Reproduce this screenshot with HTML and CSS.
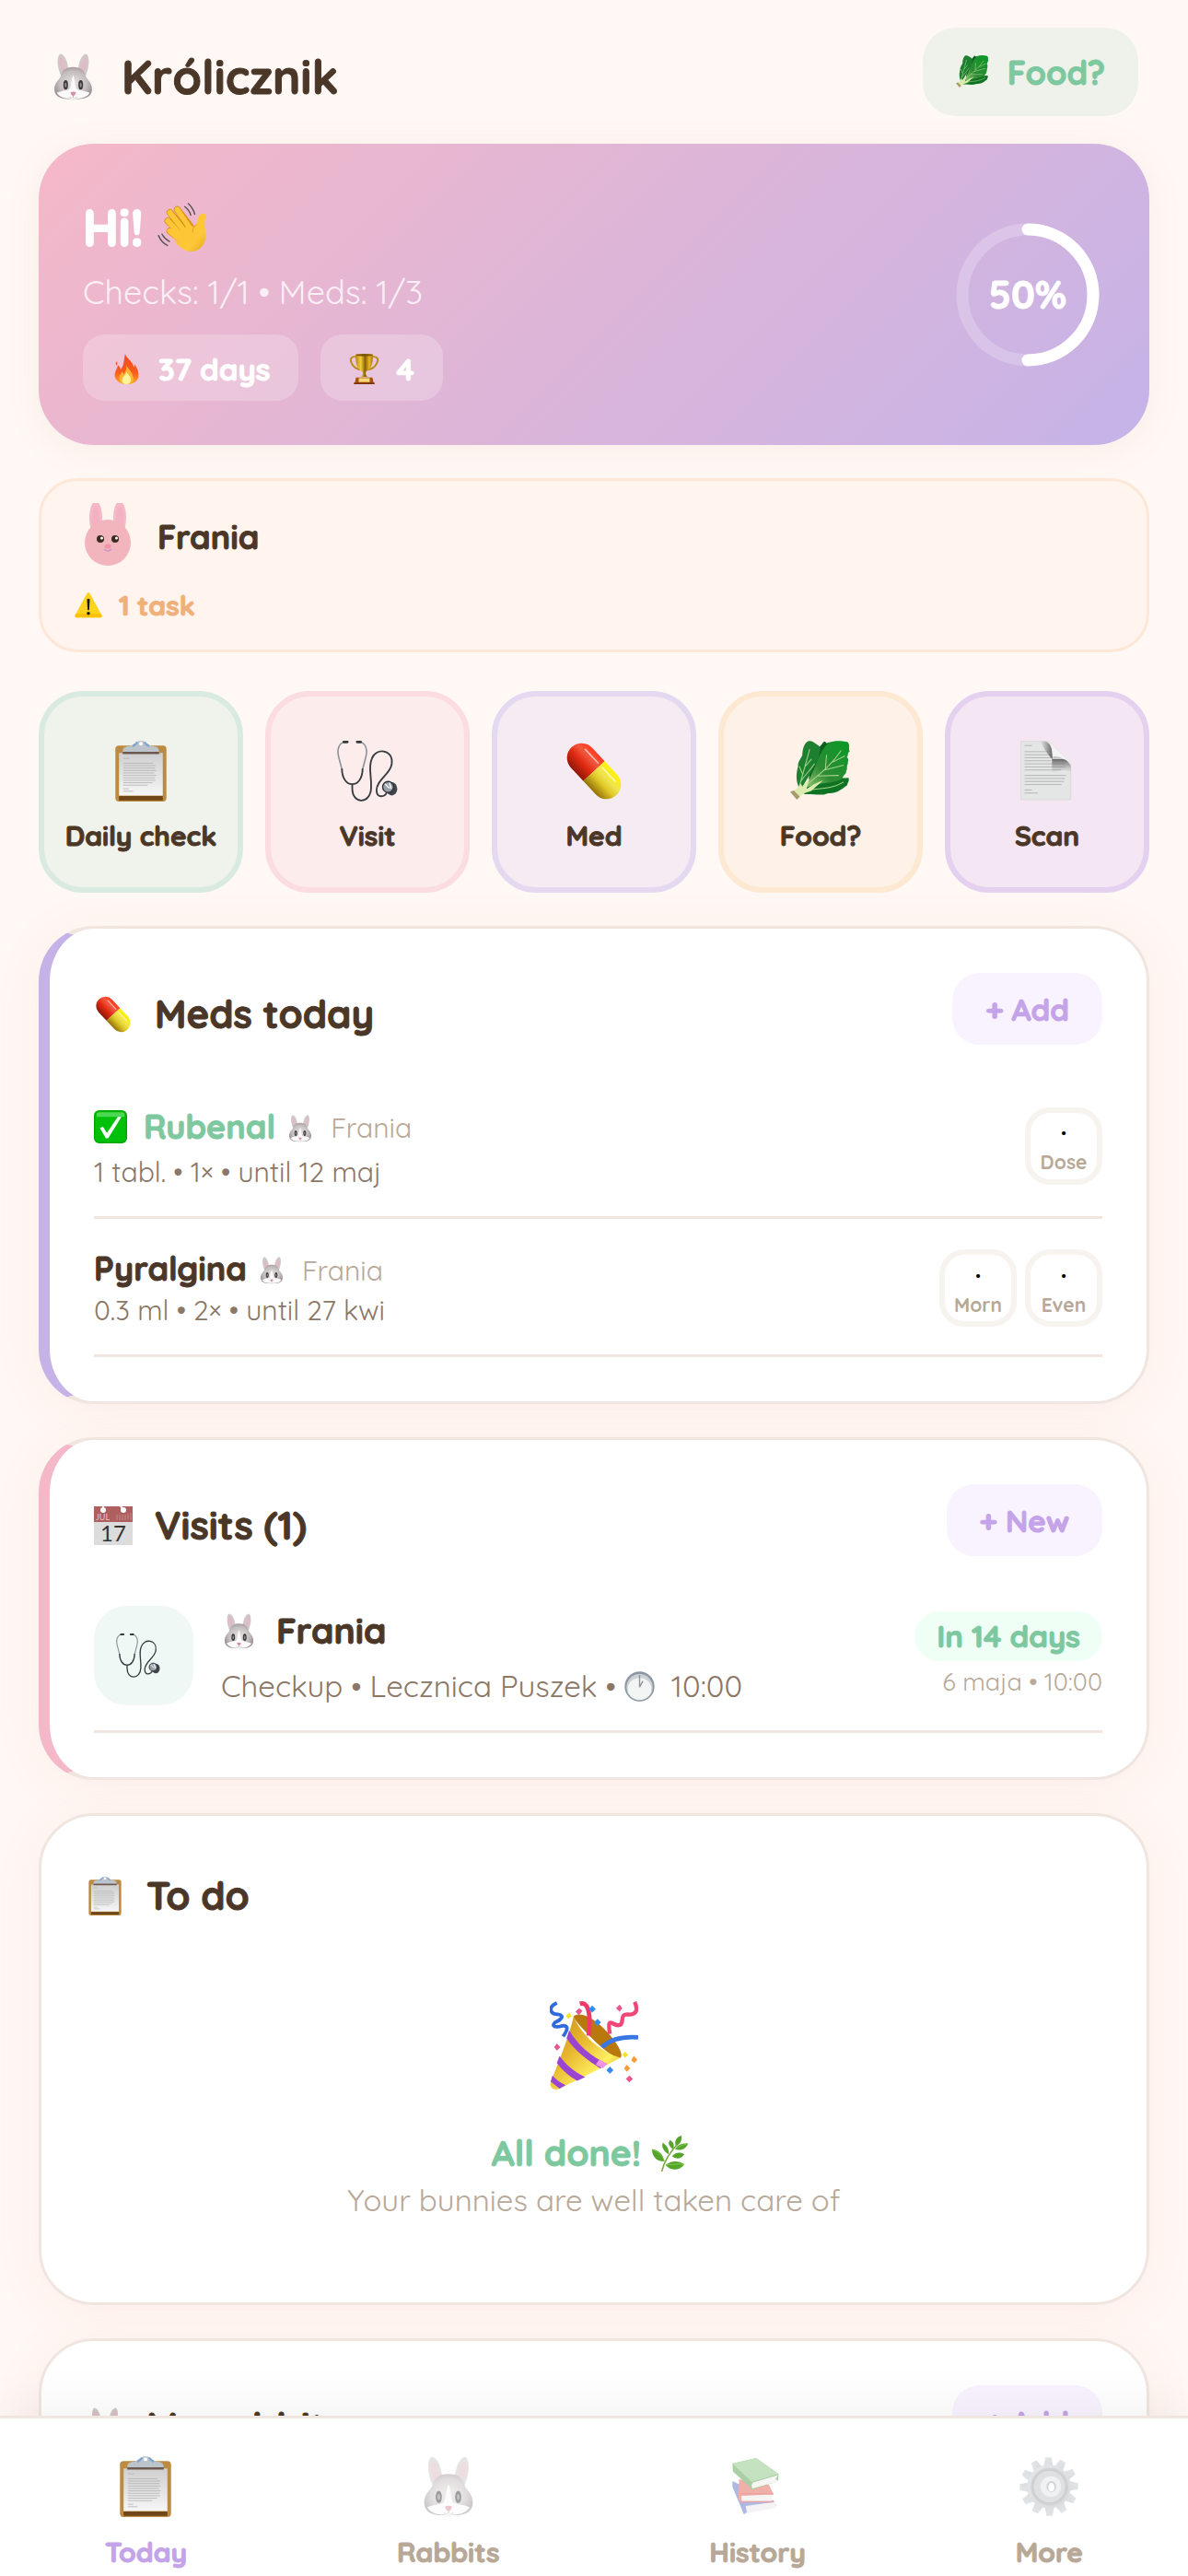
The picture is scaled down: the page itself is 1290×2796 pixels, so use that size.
FILE: index.html
```html
<!DOCTYPE html>
<html lang="pl">

<head>
    <meta charset="UTF-8">
    <meta name="viewport" content="width=device-width, initial-scale=1.0">
    <title>Królicznik</title>
    <link rel="stylesheet" href="styles.css">
</head>

<body>
    <!-- icon sprite -->
    <svg class="sprite" aria-hidden="true">
        <defs>
            <linearGradient id="gGold" x1="0" y1="0" x2="1" y2="0">
                <stop offset="0" stop-color="#b8860b"/><stop offset=".3" stop-color="#f2cf3a"/>
                <stop offset=".55" stop-color="#8a6008"/><stop offset=".8" stop-color="#e8b820"/><stop offset="1" stop-color="#a87408"/>
            </linearGradient>
            <linearGradient id="gHand" x1="0" y1="0" x2="1" y2="1">
                <stop offset="0" stop-color="#fbc232"/><stop offset=".7" stop-color="#fdc838"/><stop offset="1" stop-color="#e8a322"/>
            </linearGradient>
            <radialGradient id="gFur" cx=".5" cy=".5" r=".55">
                <stop offset="0" stop-color="#e6e1e1"/><stop offset=".65" stop-color="#c6bfc0"/><stop offset="1" stop-color="#9b9296"/>
            </radialGradient>
            <linearGradient id="gFlame" x1="0" y1="0" x2="0" y2="1">
                <stop offset="0" stop-color="#f04a20"/><stop offset=".6" stop-color="#fa5a1e"/><stop offset="1" stop-color="#ffa726"/>
            </linearGradient>
            <linearGradient id="gPaper" x1="0" y1="0" x2="0" y2="1">
                <stop offset="0" stop-color="#cfcfcf"/><stop offset="1" stop-color="#f6f6f6"/>
            </linearGradient>
            <linearGradient id="gRed" x1="0" y1="0" x2="0" y2="1">
                <stop offset="0" stop-color="#ff3a20"/><stop offset=".3" stop-color="#f0583e"/><stop offset=".6" stop-color="#e02a12"/><stop offset="1" stop-color="#8e1808"/>
            </linearGradient>
            <linearGradient id="gYellow" x1="0" y1="0" x2="0" y2="1">
                <stop offset="0" stop-color="#fff200"/><stop offset=".35" stop-color="#f0e450"/><stop offset=".6" stop-color="#e0c828"/><stop offset="1" stop-color="#937008"/>
            </linearGradient>
            <linearGradient id="gCone" x1="0" y1="0" x2="1" y2="1">
                <stop offset="0" stop-color="#c88a18"/><stop offset=".4" stop-color="#e8b830"/><stop offset=".7" stop-color="#fff060"/><stop offset="1" stop-color="#c48a10"/>
            </linearGradient>
            <linearGradient id="gLeaf" x1="0" y1="1" x2="1" y2="0">
                <stop offset="0" stop-color="#a5cf78"/><stop offset=".4" stop-color="#2e8a34"/><stop offset="1" stop-color="#089a26"/>
            </linearGradient>
            <linearGradient id="gGear" x1="0" y1="0" x2="1" y2="1">
                <stop offset="0" stop-color="#c9d1d6"/><stop offset="1" stop-color="#b7b9bc"/>
            </linearGradient>
            <linearGradient id="gShadeX" x1="0" y1="0" x2="1" y2="0">
                <stop offset="0" stop-color="#777" stop-opacity="0"/><stop offset="1" stop-color="#555" stop-opacity=".9"/>
            </linearGradient>
            <linearGradient id="gShadeY" x1="0" y1="0" x2="0" y2="1">
                <stop offset="0" stop-color="#555" stop-opacity=".9"/><stop offset="1" stop-color="#999" stop-opacity="0"/>
            </linearGradient>
        </defs>

        <symbol id="rabbit" viewBox="0 0 100 100">
            <path d="M24 48C17 34 13 8 22 1c11 1 18 20 18 42z" fill="#cfc8c9"/>
            <path d="M76 48C83 34 87 8 78 1 67 2 60 21 60 43z" fill="#cfc8c9"/>
            <path d="M27 40C20 28 18 13 23 8c7 4 11 18 11 32z" fill="#dfbcc3"/>
            <path d="M73 40c7-12 9-27 4-32-7 4-11 18-11 32z" fill="#dfbcc3"/>
            <path d="M50 29c16 0 23 7 26 18 2 8 14 14 14 29 0 15-13 21-28 21H38C23 97 10 91 10 76c0-15 12-21 14-29 3-11 10-18 26-18z" fill="url(#gFur)"/>
            <path d="M50 46c4 8 3 22 8 30 7 4 18 3 27 8-5 8-14 12-26 12l-9 2-9-2c-12 0-21-4-26-12 9-5 20-4 27-8 5-8 4-22 8-30z" fill="#fbfafa"/>
            <ellipse cx="34" cy="67" rx="5" ry="10" fill="#3d3a3c"/>
            <ellipse cx="66" cy="67" rx="5" ry="10" fill="#3d3a3c"/>
            <ellipse cx="34" cy="67" rx="2" ry="5" fill="#8d9095"/>
            <ellipse cx="66" cy="67" rx="2" ry="5" fill="#8d9095"/>
            <path d="M44 83q6-3 12 0-1 5-6 8-5-3-6-8z" fill="#d98f9e"/>
            <path d="M50 90v4m-8-1q4 4 8 1 4 3 8-1" fill="none" stroke="#baa" stroke-width="1.5"/>
            <ellipse cx="50" cy="97" rx="6" ry="3" fill="#f0eeee"/>
        </symbol>

        <symbol id="lettuce" viewBox="0 0 100 100">
            <path d="M30 70C34 30 44 14 52 6c3-5 5-6 8-2 6-3 8-1 10 2l-8 50z" fill="#0c5f1c"/>
            <path d="M16 82c22-18 46-20 80-21 2 6-2 8-2 12-4 2-7 6-13 9-4 4-14 4-21 5-7 4-24 0-36 1z" fill="#0e7423"/>
            <path d="M20 80C38 64 44 18 64 3c9-4 21-3 30-1 6 5 1 10 4 16-5 1-1 6-5 9 5 4 1 8 2 11-3 5 0 9-3 12 1 5-5 6-6 12-14 10-40 4-66 18z" fill="url(#gLeaf)"/>
            <path d="M14 76C8 62 11 50 13 42c-1-6 4-12 7-18 0-9 3-20 9-23 6-2 10 2 16 6 6 3 5 9 3 14-1 8-3 16-9 21-4 11-12 22-19 34z" fill="#1d8030"/>
            <path d="M14 80C20 56 26 38 32 14M20 54l-5-12M25 42l10-12M18 66c8-12 16-18 22-28" stroke="#a4d48a" stroke-width="1.6" fill="none"/>
            <path d="M14 84C38 62 66 44 84 16M58 45l2-22M54 49l34-9M70 35l20-10M44 58l36-1M22 82c26-4 46-2 66-14" stroke="#a4d48a" stroke-width="1.6" fill="none"/>
            <path d="M1 85l11 10c6-7 14-10 22-12 6-6 14-12 20-18-12 4-20 10-27 14 1-6 4-12 5-17-6 6-9 10-11 14l-4-6C14 78 8 82 1 85z" fill="#dcecae"/>
            <path d="M0 84l11 13 5-5L6 82z" fill="#a99a6c"/>
        </symbol>

        <symbol id="wave" viewBox="0 0 100 100">
            <path d="M40 14l26 34M25 20l30 34M21 37l28 27M25 57l26 21" stroke="#d98f1a" stroke-width="14" stroke-linecap="round"/>
            <path d="M46 82l2-30 18-6c8 5 13 1 14-8 1-10 7-17 13-16 7 1 6 6 3 12-3 8 1 20 1 32 0 18-12 32-31 32-14-1-21-9-34-22z" fill="url(#gHand)"/>
            <path d="M40 14l26 38M25 20l30 38M21 37l28 30M25 57l26 23" stroke="#fcc636" stroke-width="11" stroke-linecap="round"/>
            <path d="M52 50l22 0 10 24-20 14-18-14z" fill="#fcc636"/>
            <path d="M79 44q-10 6-8 16" stroke="#e8a728" stroke-width="2" fill="none" stroke-linecap="round"/>
            <path d="M62 2q9 8 13 21M55 8q9 7 12 17M2 66q6 14 18 20M9 63q5 10 15 15" stroke="#555" stroke-width="2.6" fill="none" stroke-linecap="round"/>
        </symbol>

        <symbol id="fire" viewBox="0 0 100 100">
            <path d="M45 0c5 16 26 26 29 45 3-4 2-9 1-12 11 14 16 29 14 42-3 17-18 25-38 25S14 90 11 74c-2-14 8-23 10-37 6 4 8 9 9 15C43 38 41 18 45 0z" fill="url(#gFlame)"/>
            <path d="M49 35c3 14 20 23 21 39 8 15-4 26-20 26-17 0-28-11-23-27 3-6 6-9 7-15 4 3 6 7 6 10 8-10 11-20 9-33z" fill="#ffb534"/>
            <path d="M50 60c5 11 15 14 14 26-1 9-7 14-15 14s-15-6-14-14c1-10 12-15 15-26z" fill="#fff39c"/>
            <path d="M18 25q-7 7-1 14 5-6 1-14z" fill="#f4572a"/>
        </symbol>

        <symbol id="trophy" viewBox="0 0 100 100">
            <path d="M26 10C7 7 2 17 8 30c5 12 17 20 29 22M74 10c19-3 24 7 18 20-5 12-17 20-29 22" fill="none" stroke="#b98b18" stroke-width="6"/>
            <path d="M22 1h56c1 28-3 50-22 57-4 7 1 13 6 18H38c5-5 10-11 6-18C25 51 21 29 22 1z" fill="url(#gGold)"/>
            <ellipse cx="50" cy="4" rx="28" ry="4" fill="#7c5708"/>
            <path d="M23 78h54l5 22H18z" fill="#a8500c"/>
            <path d="M32 80h36v13H32z" fill="#f5d878"/>
            <path d="M16 95h68v5H16z" fill="#7a3004"/>
        </symbol>

        <symbol id="warning" viewBox="0 0 100 100">
            <path d="M50 4q4 0 6 4l42 78q3 8-5 8H7q-8 0-5-8L44 8q2-4 6-4z" fill="#ffd21c"/>
            <path d="M4 80l-2 6q-2 8 5 8h86q8 0 5-8l-3-6z" fill="#fcc10a"/>
            <path d="M45 28q5-5 10 0l-2 38q-3 4-6 0z" fill="#1a1a1a"/>
            <circle cx="50" cy="79" r="6" fill="#1a1a1a"/>
        </symbol>

        <symbol id="clipboard" viewBox="0 0 100 100">
            <rect x="8" y="8" width="84" height="92" rx="6" fill="#bd8a42"/>
            <path d="M14 91h72v7H14z" fill="#6f4617"/>
            <path d="M14 20h72v70H14z" fill="url(#gPaper)"/>
            <path d="M21 29h10M21 37h49M21 41h53M21 45h52M21 49h54M21 53h51M21 57h54M21 61h52M21 65h53M21 69h48M21 73h40M21 79h9M21 83h16" stroke="#b0b0b0" stroke-width="1.2"/>
            <path d="M20 20c0-8 2-10 10-11 8 0 10-9 20-9s12 9 20 9c8 1 10 3 10 11z" fill="#bcc4cb"/>
            <path d="M36 9q6-2 8-7M64 9q-6-2-8-7" stroke="#7fa5cf" stroke-width="3" fill="none"/>
            <path d="M20 18h60v4H20z" fill="#6c5a52"/>
            <circle cx="50" cy="5" r="3" fill="#fff"/>
        </symbol>

        <symbol id="stethoscope" viewBox="0 0 100 100">
            <path d="M15 2C3 2-1 14 3 28l5 19M35 2c12 0 16 12 12 26l-5 19" fill="none" stroke="#8b919b" stroke-width="2.4"/>
            <path d="M8 46c0 34 34 34 34 0M25 70v8c0 28 30 26 31 0 1-22-5-34 1-48 6-19 36-17 33 8-2 17-25 26-25 43 0 14 13 12 17 4" fill="none" stroke="#363b40" stroke-width="2.8"/>
            <path d="M11 2h6M33 2h6" stroke="#34383d" stroke-width="4" stroke-linecap="round"/>
            <ellipse cx="90" cy="79" rx="9" ry="11" fill="#41464c"/>
            <circle cx="84" cy="76" r="9" fill="#9aa1a8" stroke="#2c3035" stroke-width="2"/>
            <path d="M79 71l7 7m0-9l3 10" stroke="#fff" stroke-width="2"/>
        </symbol>

        <symbol id="pill" viewBox="0 0 100 100">
            <g transform="rotate(47 50 50)">
                <path d="M50 26H20a24 24 0 0 0 0 48h30z" fill="url(#gRed)"/>
                <path d="M50 26h30a24 24 0 0 1 0 48H50z" fill="url(#gYellow)"/>
                <path d="M14 36h31" stroke="#fff" stroke-width="2.5" opacity=".6" stroke-linecap="round"/>
                <path d="M55 36h31" stroke="#fff" stroke-width="2.5" opacity=".6" stroke-linecap="round"/>
            </g>
        </symbol>

        <symbol id="document" viewBox="0 0 100 100">
            <path d="M7 1h40c6 0 10 3 13 7l22 22c5 4 7 8 7 14v53H7z" fill="#e4e5e5" stroke="#d2d2d2"/>
            <path d="M13 8h12M13 18h42M13 23h44M13 28h44M13 33h43M13 38h67M13 43h67M13 48h60M13 57h68M13 62h66M13 67h65M13 72h61M13 81h12M13 86h22" stroke="#b2b2b2" stroke-width="1.4"/>
            <path d="M38 1h9c10 3 12 12 12 29-5-2-14-18-21-29z" fill="url(#gShadeX)"/>
            <path d="M58 30h16c8 0 13 4 15 12v10c-8-5-20-3-31 1z" fill="url(#gShadeY)"/>
            <path d="M50 1c4 1 7 4 10 7l22 22c4 3 6 6 7 11-4-7-8-11-15-11H59c0-15-2-24-9-29z" fill="#f3f3f3"/>
            <path d="M59 30l1-4q10-1 19 5-2-1-5-1z" fill="#c4c4c4"/>
        </symbol>

        <symbol id="check" viewBox="0 0 100 100">
            <rect width="100" height="100" rx="16" fill="#00a800"/>
            <rect x="4" y="4" width="92" height="92" rx="12" fill="#00c10a"/>
            <path d="M8 12q0-6 8-6h68q8 0 8 6v8H8z" fill="#6fe070" opacity=".7"/>
            <path d="M18 54l9-5 12 20L72 20h11L43 85h-7z" fill="#fff"/>
        </symbol>

        <symbol id="clock" viewBox="0 0 100 100">
            <circle cx="50" cy="50" r="49" fill="#8c98a3"/>
            <circle cx="50" cy="52" r="43" fill="#cdd1d4"/>
            <ellipse cx="50" cy="58" rx="39" ry="36" fill="#f3f4f4"/>
            <path d="M50 12v40l11-20" fill="none" stroke="#8b9298" stroke-width="4"/>
        </symbol>

        <symbol id="party" viewBox="0 0 100 100">
            <path d="M27 17c-3 3 52 60 54 45C83 50 43 5 27 17z" fill="#b9780c"/>
            <path d="M27 17C23 37 8 74 1 92c-2 6 5 10 10 7 20-10 47-23 69-35-20-5-45-25-53-47z" fill="url(#gCone)"/>
            <path d="M22 33l-3 9c9 14 25 26 38 34l8-5C47 63 32 50 22 33zM11 62l-3 8c7 9 14 15 23 20l9-4C28 80 19 73 11 62zM3 84l-2 7 10 8 7-4Q9 91 3 84z" fill="#9a45d2"/>
            <path d="M52 72l8 4 5-5-9-5z" fill="#f093e4"/>
            <path d="M8 2C-3 7 1 15 9 15c9 1 3 7-3 9-5 5 1 6 8 4 8-1 6 5 1 12" fill="none" stroke="#2f6bdc" stroke-width="4"/>
            <path d="M34 3c12-4 12 20 10 36" fill="none" stroke="#ef3a68" stroke-width="5"/>
            <path d="M96 1c5 11 0 15-8 14-10 0-3 10-9 12-7 3-15-13-11 10" fill="none" stroke="#ee4778" stroke-width="4.5"/>
            <path d="M59 52q14-13 41-11" fill="none" stroke="#3977e4" stroke-width="5"/>
            <path d="M48 5l4 4-4 4-4-4zM54 20l4 4-4 4-4-4zM68 74l4 4-4 4-4-4z" fill="#378af2"/>
            <path d="M22 13l3 4-4 3-3-3zM85 57l4 4-4 3-3-3z" fill="#f4e52c"/>
            <path d="M33 8l4 3-4 5-4-4zM79 4l3 4-3 4-4-4zM8 48l4 4-4 4-3-4zM90 84l4 4-4 4-4-4z" fill="#e8588e"/>
            <path d="M95 62l4 4-3 4-4-3zM87 72l4 4-4 4-3-4z" fill="#f89c38"/>
        </symbol>

        <symbol id="herb" viewBox="0 0 100 100">
            <path d="M27 100C34 70 50 45 76 18" stroke="#78a840" stroke-width="4" fill="none"/>
            <path d="M34 72C10 72 0 56 0 38c18 2 32 14 34 34zM46 52C30 42 26 30 30 20c12 8 18 18 16 32zM58 38C46 28 44 20 50 12c10 6 14 14 8 26zM66 28C62 14 68 4 82 0c2 12-2 24-16 28zM64 38c6-12 18-18 36-16-4 14-18 22-36 16zM56 58c8-12 22-14 34-6-8 12-20 16-34 6zM38 82c16-14 36-12 52-2-14 18-36 20-52 2z" fill="#56a52b"/>
            <path d="M34 72C30 54 18 46 0 38M38 82c18-2 34-4 52-2M64 38c12-8 20-12 36-16" stroke="#82cb48" stroke-width="2.4" fill="none"/>
        </symbol>

        <symbol id="books" viewBox="0 0 100 100">
            <path d="M8 41l68 32 4 8-50 12-3 3L8 50z" fill="#5b75c8"/>
            <path d="M30 82l49-7v10l-47 9z" fill="#ece9ef"/>
            <path d="M19 38l49 9 8 16-53 13-5-5z" fill="#e26156"/>
            <path d="M23 65l50-2v11H23z" fill="#efeceb"/>
            <path d="M21 62h54M22 75h53" stroke="#d34843" stroke-width="2"/>
            <path d="M8 12l39-9 37 26-1 12-42 14L9 25z" fill="#57a04c"/>
            <path d="M8 12l39-9 37 26-44 13z" fill="#8cc682"/>
            <path d="M42 43l41-12-4 7 5 3-43 12q-3-6 1-10z" fill="#f1efec"/>
        </symbol>

        <symbol id="gear" viewBox="0 0 100 100">
            <g fill="url(#gGear)">
                <path id="cog" d="M44 2h10l3 16H41z"/>
                <use href="#cog" transform="rotate(30 50 50)"/><use href="#cog" transform="rotate(60 50 50)"/>
                <use href="#cog" transform="rotate(90 50 50)"/><use href="#cog" transform="rotate(120 50 50)"/>
                <use href="#cog" transform="rotate(150 50 50)"/><use href="#cog" transform="rotate(180 50 50)"/>
                <use href="#cog" transform="rotate(210 50 50)"/><use href="#cog" transform="rotate(240 50 50)"/>
                <use href="#cog" transform="rotate(270 50 50)"/><use href="#cog" transform="rotate(300 50 50)"/>
                <use href="#cog" transform="rotate(330 50 50)"/>
                <circle cx="50" cy="50" r="36"/>
            </g>
            <circle cx="51" cy="50" r="31" fill="#a5a8ab"/>
            <circle cx="51" cy="50" r="27" fill="#c0c3c5" stroke="#9a9da0" stroke-width="2"/>
            <circle cx="53" cy="50" r="17" fill="#e0e4e6"/>
            <ellipse cx="54" cy="50" rx="8" ry="9" fill="#a2a6aa"/>
            <ellipse cx="54" cy="51" rx="5" ry="7" fill="#fff"/>
        </symbol>
    </svg>

    <main class="screen">
        <header class="topbar">
            <h1 class="brand"><svg class="ico ico-51"><use href="#rabbit"/></svg>Królicznik</h1>
            <button type="button" class="btn-food"><svg class="ico ico-36"><use href="#lettuce"/></svg>Food?</button>
        </header>

        <section class="hero">
            <div class="hero-text">
                <h2 class="hero-title">Hi! <svg class="ico ico-54"><use href="#wave"/></svg></h2>
                <p class="hero-sub">Checks: 1/1 • Meds: 1/3</p>
                <div class="chips">
                    <span class="chip"><svg class="ico ico-33"><use href="#fire"/></svg>37 days</span>
                    <span class="chip"><svg class="ico ico-33"><use href="#trophy"/></svg>4</span>
                </div>
            </div>
            <div class="ring">
                <svg viewBox="0 0 168 168" class="ring-svg">
                    <circle class="ring-track" cx="84" cy="84" r="71"/>
                    <circle class="ring-value" cx="84" cy="84" r="71" pathLength="100"/>
                </svg>
                <span class="ring-label">50%</span>
            </div>
        </section>

        <section class="pet">
            <div class="pet-head">
                <svg class="avatar" viewBox="0 0 72 72">
                    <ellipse cx="23" cy="16" rx="7" ry="18" fill="#f4b8c6"/>
                    <ellipse cx="49" cy="16" rx="7" ry="18" fill="#f4b8c6"/>
                    <ellipse cx="23" cy="17" rx="4" ry="13" fill="#f3b1c3"/>
                    <ellipse cx="49" cy="17" rx="4" ry="13" fill="#f3b1c3"/>
                    <circle cx="36" cy="43" r="25" fill="#f2b5be"/>
                    <circle cx="28" cy="39" r="4" fill="#3a2a20"/><circle cx="44" cy="39" r="4" fill="#3a2a20"/>
                    <circle cx="29.500" cy="38" r="1.500" fill="#fff"/><circle cx="45.500" cy="38" r="1.500" fill="#fff"/>
                    <ellipse cx="36" cy="47" rx="3.500" ry="2.500" fill="#f393a5"/>
                    <path d="M32 50q4 4 8 0" fill="none" stroke="#c99acb" stroke-width="1.300"/>
                </svg>
                <h3 class="pet-name">Frania</h3>
            </div>
            <p class="pet-task"><svg class="ico ico-30"><use href="#warning"/></svg>1 task</p>
        </section>

        <div class="actions">
            <button type="button" class="action action-mint"><svg class="ico ico-66"><use href="#clipboard"/></svg>Daily check</button>
            <button type="button" class="action action-pink"><svg class="ico ico-66"><use href="#stethoscope"/></svg>Visit</button>
            <button type="button" class="action action-lilac"><svg class="ico ico-66"><use href="#pill"/></svg>Med</button>
            <button type="button" class="action action-peach"><svg class="ico ico-66"><use href="#lettuce"/></svg>Food?</button>
            <button type="button" class="action action-violet"><svg class="ico ico-66"><use href="#document"/></svg>Scan</button>
        </div>

        <section class="card card-meds">
            <div class="card-head">
                <h2 class="card-title"><svg class="ico ico-42"><use href="#pill"/></svg>Meds today</h2>
                <button type="button" class="btn-soft">+ Add</button>
            </div>
            <div class="med">
                <div class="med-info">
                    <div class="med-name med-done"><svg class="ico ico-36"><use href="#check"/></svg><strong>Rubenal</strong>
                        <span class="med-pet"><svg class="ico ico-30"><use href="#rabbit"/></svg>Frania</span></div>
                    <div class="med-dose">1 tabl. • 1× • until 12 maj</div>
                </div>
                <div class="slots">
                    <button type="button" class="slot"><span class="slot-dot">·</span>Dose</button>
                </div>
            </div>
            <div class="med">
                <div class="med-info">
                    <div class="med-name"><strong>Pyralgina</strong>
                        <span class="med-pet"><svg class="ico ico-30"><use href="#rabbit"/></svg>Frania</span></div>
                    <div class="med-dose">0.3 ml • 2× • until 27 kwi</div>
                </div>
                <div class="slots">
                    <button type="button" class="slot"><span class="slot-dot">·</span>Morn</button>
                    <button type="button" class="slot"><span class="slot-dot">·</span>Even</button>
                </div>
            </div>
        </section>

        <section class="card card-visits">
            <div class="card-head">
                <h2 class="card-title">
                    <svg class="ico ico-42" viewBox="0 0 42 42">
                        <rect width="42" height="42" fill="#dcdcdc"/>
                        <rect width="42" height="17" fill="#ae5f60"/>
                        <circle cx="10" cy="4" r="3" fill="#fff"/><circle cx="32" cy="4" r="3" fill="#fff"/>
                        <path d="M10 0v4M29 0l3 4" stroke="#fff" stroke-width="2"/>
                        <path d="M25 9v6M28 9v6M31 9v6M34 9v6M37 8v6M40 7v8" stroke="#c98b8b"/>
                        <text class="cal-month" x="2" y="15">JUL</text>
                        <text class="cal-day" x="21" y="38" text-anchor="middle">17</text>
                    </svg>
                    Visits (1)
                </h2>
                <button type="button" class="btn-soft">+ New</button>
            </div>
            <div class="visit">
                <div class="visit-icon"><svg class="ico ico-48"><use href="#stethoscope"/></svg></div>
                <div class="visit-info">
                    <h3 class="visit-name"><svg class="ico ico-39"><use href="#rabbit"/></svg>Frania</h3>
                    <p class="visit-sub">Checkup • Lecznica Puszek • <svg class="ico ico-33"><use href="#clock"/></svg><span class="visit-time">10:00</span></p>
                </div>
                <div class="visit-when">
                    <span class="badge">In 14 days</span>
                    <span class="visit-date">6 maja • 10:00</span>
                </div>
            </div>
        </section>

        <section class="card">
            <div class="card-head">
                <h2 class="card-title"><svg class="ico ico-42"><use href="#clipboard"/></svg>To do</h2>
            </div>
            <div class="empty">
                <svg class="ico ico-96"><use href="#party"/></svg>
                <p class="empty-title">All done! <svg class="ico ico-39"><use href="#herb"/></svg></p>
                <p class="empty-sub">Your bunnies are well taken care of</p>
            </div>
        </section>

        <section class="card">
            <div class="card-head">
                <h2 class="card-title"><svg class="ico ico-42"><use href="#rabbit"/></svg>My rabbits</h2>
                <button type="button" class="btn-soft">+ Add</button>
            </div>
        </section>
    </main>

    <nav class="tabbar">
        <a href="#today" class="tab tab-active"><svg class="ico ico-66"><use href="#clipboard"/></svg>Today</a>
        <a href="#rabbits" class="tab"><svg class="ico ico-66"><use href="#rabbit"/></svg>Rabbits</a>
        <a href="#history" class="tab"><svg class="ico ico-66"><use href="#books"/></svg>History</a>
        <a href="#more" class="tab"><svg class="ico ico-66"><use href="#gear"/></svg>More</a>
    </nav>
</body>

</html>
```

FILE: styles.css
```css
* {
    box-sizing: border-box;
    margin: 0;
    padding: 0;
}

:root {
    --bg: #fff8f5;
    --text: #4a3728;
    --soft: #8b7765;
    --muted: #b8a898;
    --line: #f0e6df;
    --pink: #f5b8c8;
    --lilac: #c5b3e8;
    --violet: #c4a3e8;
    --green: #7ec8a0;
    --orange: #f0b07a;
}

body {
    display: flex;
    flex-direction: column;
    height: 100vh;
    background: var(--bg);
    color: var(--text);
    font-family: Quicksand, Lato, sans-serif;
    font-size: 36px;
}

button {
    border: none;
    font: inherit;
    color: inherit;
    cursor: pointer;
}

.sprite {
    position: absolute;
    width: 0;
    height: 0;
}

.ico {
    display: inline-block;
    flex: none;
}

.ico-30 { width: 30px; height: 30px; }
.ico-33 { width: 33px; height: 33px; }
.ico-36 { width: 36px; height: 36px; }
.ico-39 { width: 39px; height: 39px; }
.ico-42 { width: 42px; height: 42px; }
.ico-48 { width: 48px; height: 48px; }
.ico-51 { width: 51px; height: 51px; }
.ico-54 { width: 54px; height: 54px; }
.ico-66 { width: 66px; height: 66px; }
.ico-96 { width: 96px; height: 96px; }

.cal-month {
    font: 9px Lato, sans-serif;
    fill: #e6c4c4;
}

.cal-day {
    font: 24px Lato, sans-serif;
    fill: #333;
}

/* extra bold labels */
.brand,
.card-title,
.btn-food,
.btn-soft,
.chip,
.ring-label,
.pet-name,
.pet-task,
.action,
.med-name strong,
.visit-name,
.badge,
.empty-title,
.tab {
    font-weight: 700;
    -webkit-text-stroke: 1px;
}

.screen {
    flex: 1;
    min-height: 0;
    overflow: hidden auto;
    scrollbar-width: none;
    padding: 0 42px;
}

/* header */
.topbar {
    display: flex;
    justify-content: space-between;
    align-items: center;
    padding: 30px 12px;
}

.brand {
    display: flex;
    align-items: center;
    gap: 27px;
    padding-top: 10px;
    font-size: 51px;
    line-height: 60px;
}

.btn-food {
    display: flex;
    align-items: center;
    gap: 20px;
    height: 96px;
    padding: 0 36px;
    border-radius: 36px;
    background: #eff2eb;
    color: var(--green);
    font-size: 36px;
}

/* greeting */
.hero {
    display: flex;
    justify-content: space-between;
    align-items: center;
    padding: 48px;
    border-radius: 60px;
    background: linear-gradient(135deg, var(--pink), var(--lilac));
    box-shadow: 0 6px 36px rgba(200, 140, 120, 0.1);
    color: #fff;
}

.hero-title {
    display: flex;
    align-items: center;
    gap: 15px;
    font-size: 54px;
    line-height: 86px;
    -webkit-text-stroke: 2px;
}

.hero-sub {
    margin-bottom: 19px;
    line-height: 54px;
    color: rgba(255, 255, 255, 0.8);
}

.chips {
    display: flex;
    gap: 24px;
}

.chip {
    display: flex;
    align-items: center;
    gap: 18px;
    height: 72px;
    padding: 3px 31px 0;
    border-radius: 24px;
    background: rgba(255, 255, 255, 0.22);
    font-size: 33px;
}

.ring {
    display: grid;
    place-items: center;
}

.ring-svg,
.ring-label {
    grid-area: 1 / 1;
}

.ring-svg {
    width: 168px;
    height: 168px;
    transform: rotate(-90deg);
}

.ring-svg circle {
    fill: none;
    stroke-width: 13;
}

.ring-svg .ring-track {
    stroke: rgba(255, 255, 255, 0.22);
}

.ring-svg .ring-value {
    stroke: #fff;
    stroke-linecap: round;
    stroke-dasharray: 50 100;
}

.ring-label {
    font-size: 42px;
}

/* rabbit summary */
.pet {
    margin: 36px 0 42px;
    padding: 24px 36px 27px;
    border: 3px solid #fde8d8;
    border-radius: 42px;
    background: #fff4ee;
}

.pet-head {
    display: flex;
    align-items: center;
    gap: 18px;
}

.avatar {
    width: 72px;
    height: 72px;
}

.pet-name {
    font-size: 36px;
}

.pet-task {
    display: flex;
    align-items: center;
    gap: 18px;
    margin-top: 18px;
    line-height: 42px;
    font-size: 30px;
    color: var(--orange);
}

/* quick actions */
.actions {
    display: grid;
    grid-template-columns: repeat(5, 1fr);
    gap: 24px;
    margin-bottom: 36px;
}

.action {
    display: flex;
    flex-direction: column;
    align-items: center;
    gap: 21px;
    padding: 48px 0 39px;
    border: 6px solid;
    border-radius: 48px;
    font-size: 30px;
    line-height: 33px;
}

.action-mint { background: #f0f2ec; border-color: #d9ebe0; }
.action-pink { background: #fdecec; border-color: #fbdce1; }
.action-lilac { background: #f5ebf3; border-color: #e4d9f0; }
.action-peach { background: #fef1e7; border-color: #fde8d2; }
.action-violet { background: #f4e7f3; border-color: #e3d1ef; }

/* cards */
.card {
    margin-bottom: 36px;
    padding: 48px;
    border: 3px solid var(--line);
    border-radius: 60px;
    background: #fff;
    box-shadow: 0 6px 48px rgba(240, 150, 130, 0.1);
}

.card-meds {
    border-left: 12px solid var(--lilac);
}

.card-visits {
    border-left: 12px solid var(--pink);
}

.card-head {
    display: flex;
    justify-content: space-between;
    align-items: center;
    margin-bottom: 30px;
}

.card-title {
    display: flex;
    align-items: center;
    gap: 24px;
    padding-top: 12px;
    font-size: 42px;
    line-height: 54px;
}

.btn-soft {
    height: 78px;
    padding: 0 36px;
    border-radius: 30px;
    background: #f8f3fe;
    color: var(--violet);
    font-size: 33px;
}

.med {
    display: flex;
    justify-content: space-between;
    align-items: center;
    padding: 30px 0 27px;
    border-bottom: 3px solid var(--line);
}

.med-name {
    display: flex;
    align-items: center;
    gap: 12px;
    line-height: 48px;
}

.med-done {
    line-height: 57px;
}

.med-done strong {
    padding-left: 6px;
    color: var(--green);
}

.med-pet {
    display: flex;
    align-items: center;
    gap: 18px;
    height: 48px;
    padding-top: 4px;
    font-size: 30px;
    color: var(--muted);
}

.med-dose {
    font-size: 30px;
    line-height: 42px;
    color: var(--soft);
}

.slots {
    display: flex;
    gap: 9px;
}

.slot {
    display: flex;
    flex-direction: column;
    align-items: center;
    justify-content: center;
    gap: 3px;
    width: 84px;
    height: 84px;
    border: 6px solid #f7f3ef;
    border-radius: 27px;
    background: #fff;
    font-size: 21px;
    font-weight: 700;
    line-height: 27px;
    color: var(--muted);
}

.slot-dot {
    font-size: 30px;
    line-height: 33px;
    color: #000;
}

.visit {
    display: flex;
    gap: 30px;
    padding: 24px 0 21px;
    border-bottom: 3px solid var(--line);
}

.visit-icon {
    display: flex;
    align-items: center;
    padding-left: 24px;
    width: 108px;
    height: 108px;
    border-radius: 36px;
    background: #eff8f4;
}

.visit-info {
    flex: 1;
}

.visit-name {
    display: flex;
    align-items: center;
    gap: 21px;
    font-size: 39px;
    line-height: 54px;
}

.visit-sub {
    display: flex;
    align-items: center;
    gap: 9px;
    margin-top: 6px;
    font-size: 33px;
    line-height: 54px;
    color: var(--soft);
}

.visit-time {
    margin-left: 9px;
}

.visit-when {
    display: flex;
    flex-direction: column;
    align-items: flex-end;
    gap: 3px;
    padding-top: 6px;
}

.badge {
    padding: 0 24px;
    border-radius: 27px;
    background: #effff6;
    color: var(--green);
    font-size: 33px;
    line-height: 54px;
}

.visit-date {
    font-size: 27px;
    line-height: 39px;
    color: var(--muted);
}

.empty {
    display: flex;
    flex-direction: column;
    align-items: center;
    padding: 57px 0 39px;
}

.empty-title {
    display: flex;
    align-items: center;
    gap: 12px;
    margin-top: 42px;
    padding-right: 9px;
    font-size: 39px;
    line-height: 54px;
    color: var(--green);
}

.empty-sub {
    font-size: 33px;
    line-height: 48px;
    color: var(--muted);
}

/* bottom navigation */
.tabbar {
    position: relative;
    display: flex;
    justify-content: space-around;
    height: 174px;
    padding-top: 41px;
    border-top: 3px solid var(--line);
    background: #fff;
    box-shadow: 0 -6px 60px rgba(0, 0, 0, 0.06);
}

.tab {
    display: flex;
    flex-direction: column;
    align-items: center;
    gap: 20px;
    font-size: 30px;
    line-height: 36px;
    color: var(--muted);
    text-decoration: none;
}

.tab .ico {
    opacity: 0.5;
}

.tab-active {
    color: var(--violet);
}

.tab-active .ico {
    opacity: 1;
}
```
